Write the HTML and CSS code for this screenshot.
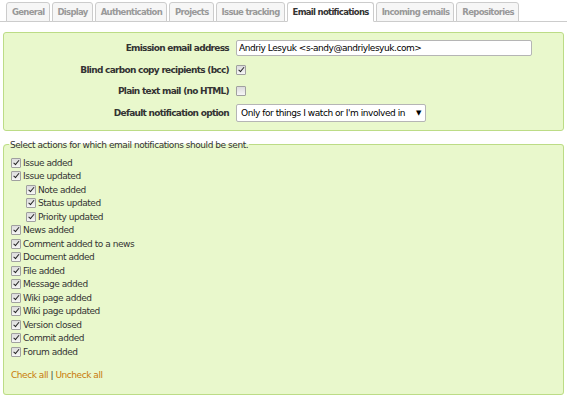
FILE: index.html
```html
<!DOCTYPE html>
<html lang="en">
<head>
    <meta charset="UTF-8">
    <title>Settings - Email notifications</title>
    <link rel="stylesheet" href="styles.css">
</head>
<body>

    <div class="tabs">
        <ul>
            <li><a href="#">General</a></li>
            <li><a href="#">Display</a></li>
            <li><a href="#">Authentication</a></li>
            <li><a href="#">Projects</a></li>
            <li><a href="#">Issue tracking</a></li>
            <li><a href="#" class="selected">Email notifications</a></li>
            <li><a href="#">Incoming emails</a></li>
            <li><a href="#">Repositories</a></li>
        </ul>
    </div>

    <form class="settings">
        <div class="box tabular">
            <p>
                <label for="mail_from">Emission email address</label>
                <input type="text" id="mail_from" class="text-field" value="Andriy Lesyuk <s-andy@andriylesyuk.com>">
            </p>
            <p>
                <label for="bcc">Blind carbon copy recipients (bcc)</label>
                <input type="checkbox" id="bcc" checked>
            </p>
            <p>
                <label for="plain_text">Plain text mail (no HTML)</label>
                <input type="checkbox" id="plain_text">
            </p>
            <p>
                <label for="default_notification">Default notification option</label>
                <span class="select-box" id="default_notification">Only for things I watch or I'm involved in<span class="arrow">&#9660;</span></span>
            </p>
        </div>

        <fieldset class="box notified-events">
            <legend>Select actions for which email notifications should be sent.</legend>
            <label><input type="checkbox" checked>Issue added</label>
            <label><input type="checkbox" checked>Issue updated</label>
            <label class="parent"><input type="checkbox" checked>Note added</label>
            <label class="parent"><input type="checkbox" checked>Status updated</label>
            <label class="parent"><input type="checkbox" checked>Priority updated</label>
            <label><input type="checkbox" checked>News added</label>
            <label><input type="checkbox" checked>Comment added to a news</label>
            <label><input type="checkbox" checked>Document added</label>
            <label><input type="checkbox" checked>File added</label>
            <label><input type="checkbox" checked>Message added</label>
            <label><input type="checkbox" checked>Wiki page added</label>
            <label><input type="checkbox" checked>Wiki page updated</label>
            <label><input type="checkbox" checked>Version closed</label>
            <label><input type="checkbox" checked>Commit added</label>
            <label><input type="checkbox" checked>Forum added</label>
            <p class="check-links"><a href="#">Check all</a> | <a href="#">Uncheck all</a></p>
        </fieldset>
    </form>

</body>
</html>
```

FILE: styles.css
```css
body {
    margin: 0;
    background-color: #fff;
    color: #333;
    font-family: "DejaVu Sans", Verdana, sans-serif;
    font-size: 9px;
    letter-spacing: -0.45px;
}
a {
    color: #c87a0a;
    text-decoration: none;
}

/* Tabs */
.tabs {
    padding-top: 2px;
    border-bottom: 1px solid #ccc;
}
.tabs ul {
    display: flex;
    gap: 2px;
    margin: 0;
    padding: 0 0 0 6px;
    list-style: none;
}
.tabs li {
    margin-bottom: -1px;
}
.tabs a {
    display: block;
    height: 18px;
    line-height: 18px;
    padding: 0 4px 0 5px;
    border: 1px solid #ccc;
    border-radius: 3px 3px 0 0;
    background-color: #f6f6f6;
    color: #999;
    font-size: 8.5px;
    font-weight: bold;
    white-space: nowrap;
    letter-spacing: -0.7px;
}
.tabs a.selected {
    background-color: #fff;
    border-bottom-color: #fff;
    color: #333;
}

/* Boxes */
.settings {
    padding: 10px 3px 0 3px;
}
.box {
    background-color: #e9f8cc;
    border: 1px solid #bcdc86;
    border-radius: 3px;
}
.tabular {
    padding: 4.5px 0 6px 0;
    margin-bottom: 8px;
}
.tabular p {
    display: flex;
    align-items: center;
    margin: 0;
    height: 21.5px;
}
.tabular label {
    width: 225px;
    margin-right: 7px;
    text-align: right;
    font-weight: bold;
    color: #333;
    white-space: nowrap;
    letter-spacing: -0.72px;
}
.text-field {
    width: 296px;
    height: 16px;
    box-sizing: border-box;
    padding: 0 2px;
    border: 1px solid #b5b5b5;
    border-radius: 2px;
    font-family: inherit;
    font-size: 9px;
    letter-spacing: -0.45px;
    color: #000;
    outline: none;
}
.select-box {
    display: flex;
    align-items: center;
    justify-content: space-between;
    width: 190px;
    height: 18px;
    box-sizing: border-box;
    padding: 0 4px 0 4px;
    border: 1px solid #b5b5b5;
    border-radius: 2px;
    background-color: #fff;
    color: #000;
    white-space: nowrap;
    overflow: hidden;
}
.select-box .arrow {
    font-size: 7px;
}

/* Checkboxes */
input[type="checkbox"] {
    appearance: none;
    position: relative;
    width: 10px;
    height: 10px;
    margin: 0 2px 0 0;
    border: 1px solid #a0a0a0;
    border-radius: 1px;
    background: linear-gradient(#dcdcdc, #f6f6f6);
    vertical-align: -2px;
}
input[type="checkbox"]:checked::after {
    content: "";
    position: absolute;
    left: 2.5px;
    top: 0px;
    width: 2px;
    height: 4.5px;
    border: solid #222;
    border-width: 0 1.7px 1.7px 0;
    transform: rotate(40deg);
}

/* Notified events */
.notified-events {
    margin: 0;
    padding: 6px 7px 13px 7px;
    border-top-left-radius: 4px;
}
.notified-events legend {
    line-height: 12px;
    padding: 0 1px;
    margin-left: -2px;
    color: #333;
}
.notified-events label {
    display: block;
    line-height: 13.5px;
    height: 13.5px;
}
.notified-events label.parent {
    padding-left: 15px;
}
.check-links {
    margin: 10px 0 0 0;
    line-height: 12px;
}
```
